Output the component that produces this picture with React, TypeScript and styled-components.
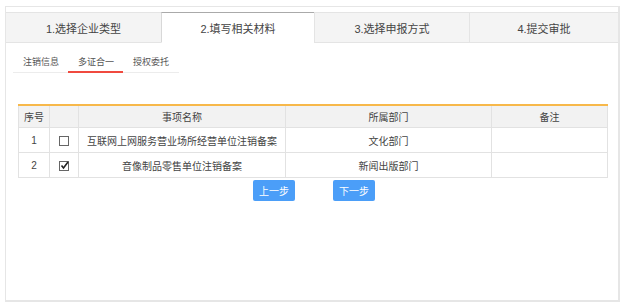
import React, { useState } from 'react';
import styled, { createGlobalStyle } from 'styled-components';

const GlobalStyle = createGlobalStyle`
    html, body {
        margin: 0;
        padding: 0;
        background: #fff;
    }
    body {
        font-family: "Liberation Sans", "Noto Sans CJK SC", sans-serif;
        color: #333;
    }
`;

const Panel = styled.div`
    margin: 6px 4px 0 5px;
    height: 296px;
    box-sizing: border-box;
    border: 1px solid #e6e6e6;
    border-right-width: 2px;
    border-bottom-width: 2px;
    padding-top: 5px;
`;

const StepBar = styled.div`
    display: grid;
    grid-template-columns: 155px 153px 155px 1fr;
    height: 31px;
`;

const Step = styled.div<{ $active?: boolean }>`
    display: flex;
    align-items: center;
    justify-content: center;
    font-size: 11px;
    color: #444;
    white-space: nowrap;
    box-sizing: border-box;
    background: ${(p) => (p.$active ? '#fff' : '#f4f4f4')};
    border-top: 1px solid ${(p) => (p.$active ? '#aaa' : '#e4e4e4')};
    border-left: 1px solid ${(p) => (p.$active ? '#d8d8d8' : '#e4e4e4')};
    border-bottom: 1px solid ${(p) => (p.$active ? '#fff' : '#e4e4e4')};
    &:first-child {
        border-left: none;
    }
`;

const SubTabs = styled.div`
    display: flex;
    width: 166px;
    margin: 8px 0 0 7px;
    border-bottom: 1px solid #ececec;
`;

const SubTab = styled.div<{ $active?: boolean }>`
    padding: 4px 9px 4px 10px;
    font-size: 9px;
    color: #555;
    white-space: nowrap;
    position: relative;
    &::after {
        content: '';
        display: ${(p) => (p.$active ? 'block' : 'none')};
        position: absolute;
        left: 0;
        right: 0;
        bottom: -1px;
        height: 2px;
        background: #f04a3f;
    }
`;

const TableWrap = styled.div`
    margin: 31px 10px 0 12px;
`;

const Table = styled.table`
    width: 100%;
    border-collapse: collapse;
    font-size: 10px;
    color: #444;
    border-top: 2px solid #f7b84a;
    th, td {
        border: 1px solid #e2e2e2;
        text-align: center;
        font-weight: normal;
        padding: 0;
        height: 24px;
        white-space: nowrap;
    }
    th {
        height: 21px;
        background: #f2f2f2;
    }
`;

const Check = styled.span`
    display: inline-block;
    width: 8px;
    height: 8px;
    border: 1px solid #666;
    vertical-align: middle;
    position: relative;
    background: #fff;
    svg {
        position: absolute;
        left: 0;
        top: -1px;
    }
`;

const Actions = styled.div`
    display: flex;
    justify-content: center;
    gap: 38px;
    margin: 2px 0 0 4px;
`;

const Button = styled.button`
    width: 42px;
    height: 21px;
    border: none;
    border-radius: 2px;
    background: #4b9ef8;
    color: #fff;
    font-size: 10px;
    font-family: inherit;
    padding: 0;
`;

const rows = [
    { no: 1, name: '互联网上网服务营业场所经营单位注销备案', dept: '文化部门', checked: false },
    { no: 2, name: '音像制品零售单位注销备案', dept: '新闻出版部门', checked: true },
];

export default function App() {
    const [items] = useState(rows);
    return (
        <>
            <GlobalStyle />
            <Panel>
                <StepBar>
                    <Step>1.选择企业类型</Step>
                    <Step $active>2.填写相关材料</Step>
                    <Step>3.选择申报方式</Step>
                    <Step>4.提交审批</Step>
                </StepBar>
                <SubTabs>
                    <SubTab>注销信息</SubTab>
                    <SubTab $active>多证合一</SubTab>
                    <SubTab>授权委托</SubTab>
                </SubTabs>
                <TableWrap>
                    <Table>
                        <colgroup>
                            <col style={{ width: 31 }} />
                            <col style={{ width: 29 }} />
                            <col style={{ width: 207 }} />
                            <col style={{ width: 206 }} />
                            <col />
                        </colgroup>
                        <thead>
                            <tr>
                                <th>序号</th>
                                <th></th>
                                <th>事项名称</th>
                                <th>所属部门</th>
                                <th>备注</th>
                            </tr>
                        </thead>
                        <tbody>
                            {items.map((item) => (
                                <tr key={item.no}>
                                    <td>{item.no}</td>
                                    <td>
                                        <Check>
                                            {item.checked && (
                                                <svg width='9' height='9' viewBox='0 0 9 9'>
                                                    <path d='M1.5 4.5 L3.5 7 L8 1' stroke='#222' strokeWidth='1.6' fill='none' />
                                                </svg>
                                            )}
                                        </Check>
                                    </td>
                                    <td>{item.name}</td>
                                    <td>{item.dept}</td>
                                    <td></td>
                                </tr>
                            ))}
                        </tbody>
                    </Table>
                </TableWrap>
                <Actions>
                    <Button>上一步</Button>
                    <Button>下一步</Button>
                </Actions>
            </Panel>
        </>
    );
}
